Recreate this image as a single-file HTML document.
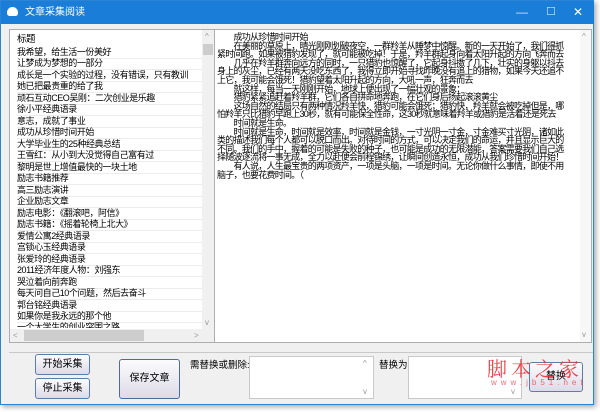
<!DOCTYPE html>
<html><head><meta charset="utf-8"><style>
*{box-sizing:border-box;margin:0;padding:0}
body{width:600px;height:412px;background:#fff;position:relative;overflow:hidden;font-family:"Liberation Sans","Noto Sans CJK SC","WenQuanYi Zen Hei",sans-serif;color:#000}
.win{position:absolute;left:0;top:0;width:594px;height:405px;background:#f0f0f0;border:1px solid #2b84d6;box-shadow:2px 2px 5px rgba(0,0,0,.35)}
.title{position:absolute;left:0;top:0;width:593px;height:23px;background:#1a7ed8;color:#fff;font-size:10px;line-height:23px}
.title .t{position:absolute;left:24px;top:0}
.cloud{position:absolute;left:6px;top:6px;width:11px;height:9px;background:#fff;border-radius:6px 6px 3px 3px}
.ctl{position:absolute;top:0;color:#cfe4f7;font-size:12px}
.box{position:absolute;background:#fff;border:1px solid #adadad}
.list{left:8px;top:28px;width:206px;height:314px}
.list .row{position:absolute;left:7px;font-size:9px;letter-spacing:-0.45px;line-height:11px;white-space:nowrap;width:186px;border-bottom:1px solid #ececec}
.vs{position:absolute;background:#f0f0f0}
.txt{left:213px;top:28px;width:378px;height:314px;overflow:hidden}
.txt .l{position:absolute;left:2px;font-size:9px;line-height:9px;white-space:nowrap;letter-spacing:-0.75px}
.btn{position:absolute;border:1px solid #5c7ea6;border-radius:3px;background:linear-gradient(#fbfbfd,#dcdbe8);font-size:10px;text-align:center}
.lab{position:absolute;font-size:9.5px;white-space:nowrap}
.ta{position:absolute;background:#fff;border:1px solid #c9c9c9}
.arr{position:absolute;font-size:8px;color:#999}
</style></head><body>
<div class="win">
<div class="title"><div class="cloud"></div><span class="t">文章采集阅读</span>
<span class="ctl" style="left:515px">—</span><span class="ctl" style="left:545px;font-size:11px">☐</span><span class="ctl" style="left:572px;color:#fff">✕</span></div>

<div class="box list">
<div class="row" style="top:4px;border:none;font-size:9.5px">标题</div>
<div class="row" style="top:17px">我希望，给生活一份美好</div>
<div class="row" style="top:28px">让梦成为梦想的一部分</div>
<div class="row" style="top:39.5px">成长是一个实验的过程，没有错误，只有教训</div>
<div class="row" style="top:51px">她已把最贵重的给了我</div>
<div class="row" style="top:62.5px">顽石互动CEO吴刚：二次创业是乐趣</div>
<div class="row" style="top:74px">徐小平经典语录</div>
<div class="row" style="top:85.5px">意志，成就了事业</div>
<div class="row" style="top:97px">成功从珍惜时间开始</div>
<div class="row" style="top:108.5px">大学毕业生的25种经典总结</div>
<div class="row" style="top:120px">王雪红：从小到大没觉得自己富有过</div>
<div class="row" style="top:131.5px">黎明是世上增值最快的一块土地</div>
<div class="row" style="top:143px">励志书籍推荐</div>
<div class="row" style="top:154.5px">高三励志演讲</div>
<div class="row" style="top:166px">企业励志文章</div>
<div class="row" style="top:177.5px">励志电影：《翻滚吧，阿信》</div>
<div class="row" style="top:189px">励志书籍：《摇着轮椅上北大》</div>
<div class="row" style="top:200.5px">爱情公寓2经典语录</div>
<div class="row" style="top:212px">宫锁心玉经典语录</div>
<div class="row" style="top:223.5px">张爱玲的经典语录</div>
<div class="row" style="top:235px">2011经济年度人物：刘强东</div>
<div class="row" style="top:246.5px">哭泣着向前奔跑</div>
<div class="row" style="top:258px">每天问自己10个问题，然后去奋斗</div>
<div class="row" style="top:269.5px">郭台铭经典语录</div>
<div class="row" style="top:281px">如果你是我永远的那个他</div>
<div class="row" style="top:292px;height:6px;overflow:hidden;border:none">一个大学生的创业突围之路</div>
<div class="vs" style="left:192px;top:0;width:12px;height:299px"></div>
<div class="vs" style="left:193px;top:14px;width:10px;height:11px;background:#cdcdcd"></div>
<span class="arr" style="left:195px;top:2px">^</span><span class="arr" style="left:195px;top:288px">v</span>
<div class="vs" style="left:0;top:299px;width:204px;height:13px"></div>
<div class="vs" style="left:14px;top:300px;width:120px;height:11px;background:#cdcdcd"></div>
<span class="arr" style="left:3px;top:301px">&lt;</span><span class="arr" style="left:184px;top:301px">&gt;</span>
</div>

<div class="box txt">
<div class="l" style="top:3px">　　成功从珍惜时间开始</div>
<div class="l" style="top:11.6px">　　在美丽的草原上，晴光刚刚划破夜空，一群羚羊从睡梦中惊醒。新的一天开始了，我们得抓</div>
<div class="l" style="top:20.2px">紧时间跑。如果被猎豹发现了，就可能被吃掉！于是，羚羊群起身向着太阳升起的方向飞奔而去</div>
<div class="l" style="top:28.8px">　　几乎在羚羊群奔向远方的同时，一只猎豹也惊醒了，它起身抖擞了几下，壮实的身躯以抖去</div>
<div class="l" style="top:37.4px">身上的灰尘，已经有两天没吃东西了，我得立即开始寻找昨晚没有追上的猎物，如果今天还追不</div>
<div class="l" style="top:46px">上它，我可能会饿死！猎豹望着太阳升起的方向，大吼一声，狂奔而去</div>
<div class="l" style="top:54.6px">　　就这样，每当一天刚刚开始，地球上便出现了一幅壮观的景象：</div>
<div class="l" style="top:63.2px">　　猎豹紧紧追赶着羚羊群，它们各自拼命地奔跑，在它们身后扬起滚滚黄尘</div>
<div class="l" style="top:71.8px">　　这场自然的结局只有两种情况羚羊快，猎豹可能会饿死；猎豹快，羚羊就会被吃掉但是，哪</div>
<div class="l" style="top:80.4px">怕羚羊只比猎豹早跑上30秒，就有可能保全性命，这30秒就意味着羚羊或猎豹是活着还是死去</div>
<div class="l" style="top:89px">　　时间就是生命。</div>
<div class="l" style="top:97.6px">　　时间就是生命，时间就是效率，时间就是金钱，一寸光阴一寸金，寸金难买寸光阴，诸如此</div>
<div class="l" style="top:106.2px">类的描述我们每个人都可以脱口而出。对待时间的方式，可以决定我们的命运，并且显示巨大的</div>
<div class="l" style="top:114.8px">不同。我们的手中，握着的可能是失败的种子，也可能是成功的无限潜能，答案需要我们自己选</div>
<div class="l" style="top:123.4px">择随波逐流将一事无成，全力以赴便会前程锦绣，让瞬间创造永恒，成功从我们珍惜时间开始！</div>
<div class="l" style="top:132px">　　有人说，人生最宝贵的两项资产，一项是头脑，一项是时间。无论你做什么事情，即使不用</div>
<div class="l" style="top:140.6px">脑子，也要花费时间。（</div>
<div class="vs" style="left:365px;top:0;width:12px;height:312px;background:#f7f7f7"></div>
<span class="arr" style="left:367px;top:2px">^</span><span class="arr" style="left:367px;top:300px">v</span>
</div>

<div style="position:absolute;left:8px;top:351px;width:584px;height:1px;background:#c8c8c8"></div>
<div class="btn" style="left:34px;top:353px;width:55px;height:21px;line-height:19px">开始采集</div>
<div class="btn" style="left:34px;top:377px;width:55px;height:21px;line-height:19px">停止采集</div>
<div class="btn" style="left:118px;top:358px;width:61px;height:40px;line-height:38px;border-color:#4a6d9a">保存文章</div>
<div class="lab" style="left:189px;top:356px">需替换或删除:</div>
<div class="ta" style="left:248px;top:355px;width:125px;height:43px"><span class="arr" style="left:113px;top:2px">^</span><span class="arr" style="left:113px;top:30px">v</span></div>
<div class="lab" style="left:378px;top:356px">替换为:</div>
<div class="ta" style="left:407px;top:355px;width:114px;height:43px"><span class="arr" style="left:102px;top:30px">v</span></div>
<div class="btn" style="left:528px;top:361px;width:54px;height:30px;line-height:28px">替换</div>
<div style="position:absolute;left:486px;top:352px;color:#e8303a;font-size:20px;letter-spacing:4px;font-family:'Noto Serif CJK SC',serif;opacity:.9;white-space:nowrap">脚本之家</div>
<div style="position:absolute;left:490px;top:377px;color:#e8303a;font-size:8px;letter-spacing:4px;opacity:.7;white-space:nowrap">www.jb51.net</div>
</div>
</body></html>
